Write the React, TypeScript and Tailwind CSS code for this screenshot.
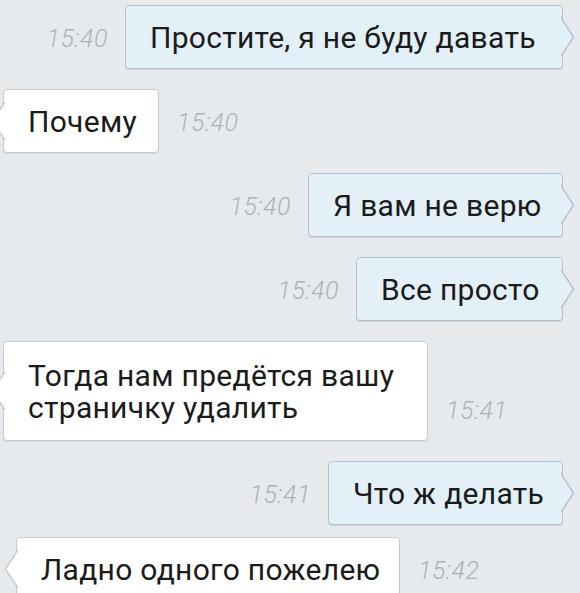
import React from "react";

interface Message {
    text: string[];
    time: string;
    out: boolean;
    mt: string;
    ml?: string;
    py: string;
    w: string;
}

const messages: Message[] = [
    { text: ["Простите, я не буду давать"], time: "15:40", out: true, mt: "mt-[5px]", py: "pt-[16px] pb-[14px]", w: "w-[438px]" },
    { text: ["Почему"], time: "15:40", out: false, mt: "mt-[20px]", ml: "ml-[3px]", py: "pt-[16px] pb-[14px]", w: "w-[156px]" },
    { text: ["Я вам не верю"], time: "15:40", out: true, mt: "mt-[20px]", py: "pt-[16px] pb-[14px]", w: "w-[255px]" },
    { text: ["Все просто"], time: "15:40", out: true, mt: "mt-[20px]", py: "pt-[16px] pb-[14px]", w: "w-[207px]" },
    {
        text: ["Тогда нам предётся вашу", "страничку удалить"],
        time: "15:41",
        out: false,
        mt: "mt-[20px]",
        ml: "ml-[3px]",
        py: "pt-[18px] pb-[16px]",
        w: "w-[425px]",
    },
    { text: ["Что ж делать"], time: "15:41", out: true, mt: "mt-[20px]", py: "pt-[16px] pb-[14px]", w: "w-[235px]" },
    { text: ["Ладно одного пожелею"], time: "15:42", out: false, mt: "mt-[12px]", ml: "ml-[16px]", py: "pt-[16px] pb-[14px]", w: "w-[384px]" },
];

// little arrow on the side of a bubble
const Tail: React.FC<{ out: boolean }> = ({ out }) =>
    out ? (
        <svg
            className="absolute right-[-13px] top-1/2 -translate-y-1/2"
            width="14"
            height="40"
            viewBox="0 0 14 40">
            <path d="M0 1 L12.5 20 L0 39" fill="#e3f0f8" stroke="#b5c3cc" strokeWidth="1.5" />
        </svg>
    ) : (
        <svg
            className="absolute left-[-13px] top-1/2 -translate-y-1/2"
            width="14"
            height="40"
            viewBox="0 0 14 40">
            <path d="M14 1 L1.5 20 L14 39" fill="#ffffff" stroke="#c6cbd0" strokeWidth="1.5" />
        </svg>
    );

const Time: React.FC<{ value: string }> = ({ value }) => (
    <span className="mb-[14px] text-[25px] leading-8 font-light italic tracking-[0.5px] text-[#acb2b7]">
        {value}
    </span>
);

export default function App() {
    return (
        <div
            className="w-[580px] h-[593px] overflow-hidden bg-[#e7eaed] flex flex-col"
            style={{ fontFamily: "Roboto, 'Noto Sans', sans-serif" }}>
            {messages.map((m, i) =>
                m.out ? (
                    <div key={i} className={`flex items-end justify-end gap-[17px] pr-[17px] ${m.mt}`}>
                        <Time value={m.time} />
                        <div
                            className={`relative shrink-0 whitespace-nowrap rounded-[4px] border border-[#b5c3cc] bg-[#e3f0f8] px-6 ${m.py} ${m.w} text-[30px] leading-8 tracking-[0.3px] text-[#1b1b1b] shadow-[0_1px_0_#c9d2d8]`}>
                            {m.text.map((t, j) => (
                                <div key={j}>{t}</div>
                            ))}
                            <Tail out />
                        </div>
                    </div>
                ) : (
                    <div key={i} className={`flex items-end gap-[18px] ${m.ml} ${m.mt}`}>
                        <div
                            className={`relative shrink-0 whitespace-nowrap rounded-[4px] border border-[#c6cbd0] bg-white px-6 ${m.py} ${m.w} text-[30px] leading-8 tracking-[0.3px] text-[#1b1b1b] shadow-[0_1px_0_#d3d8dc]`}>
                            {m.text.map((t, j) => (
                                <div key={j}>{t}</div>
                            ))}
                            <Tail out={false} />
                        </div>
                        <Time value={m.time} />
                    </div>
                )
            )}
        </div>
    );
}
